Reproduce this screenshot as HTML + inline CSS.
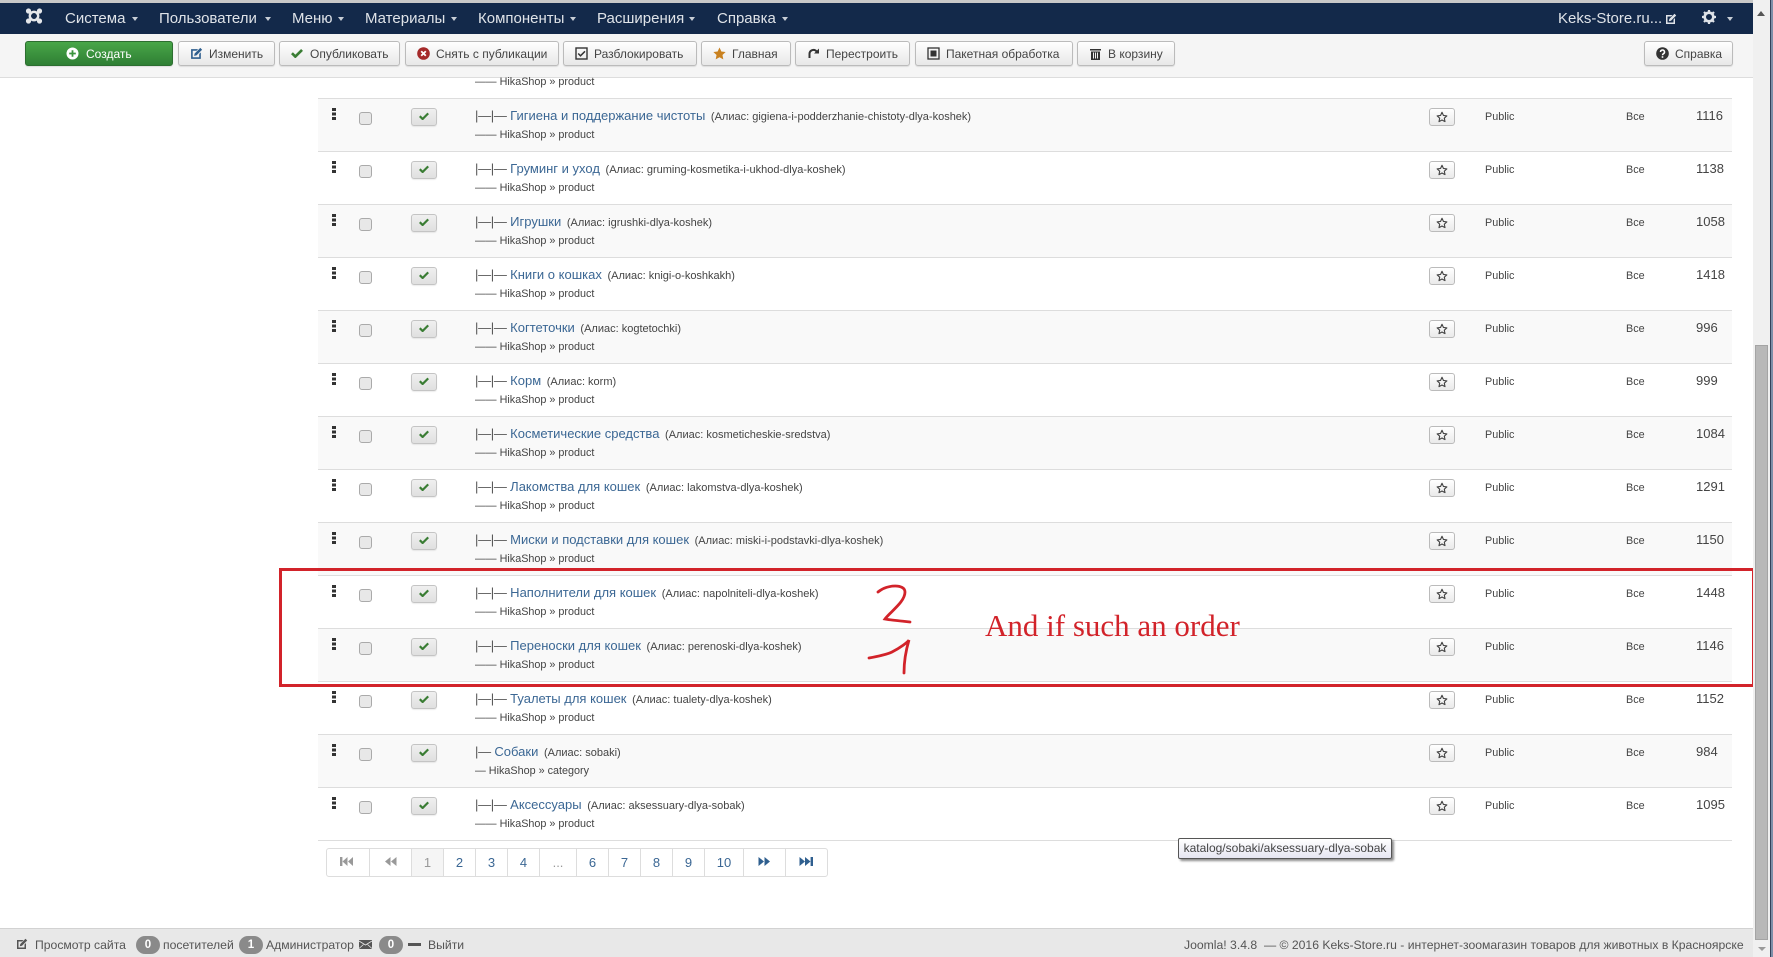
<!DOCTYPE html>
<html lang="ru"><head><meta charset="utf-8"><title>Keks-Store</title>
<style>
html,body{margin:0;padding:0;width:1773px;height:957px;overflow:hidden;background:#fff}
body{font-family:"Liberation Sans",sans-serif;position:relative;color:#333}
div,span,a,svg{position:absolute;display:block;white-space:nowrap}
#top{left:0;top:0;width:1753px;height:3px;background:#c8c8c8}
#nav{left:0;top:3px;width:1753px;height:31px;background:#13294a}
.n{top:10px;color:#dfe3e8;font-size:15px;line-height:18px}
.c{top:17px;width:0;height:0;border-left:3.5px solid transparent;border-right:3.5px solid transparent;border-top:4px solid #c8ced6}
#bar{left:0;top:34px;width:1753px;height:43px;background:#f5f5f5;border-bottom:1px solid #ddd}
.b{top:41px;height:23px;box-sizing:content-box;background:linear-gradient(#fff,#e8e8e8);border:1px solid #bbb;border-radius:3px;box-shadow:0 1px 1px rgba(0,0,0,.1)}
.b span{top:4px;font-size:12px;line-height:16px;color:#444}
.b svg{top:5px}
.r{left:318px;width:1414px;height:52px;border-bottom:1px solid #ddd}
.g{background:#f9f9f9}
.h{left:14px;top:9px;width:4px;height:3px;background:#333;box-shadow:0 4.5px 0 #333,0 9px 0 #333}
.k{left:41px;top:13px;width:11px;height:11px;background:#e8e8e8;border:1px solid #aaa;border-radius:3px}
.s{left:93px;top:9px;width:24px;height:16px;background:linear-gradient(#f0f0f0,#e0e0e0);border:1px solid #c4c4c4;border-radius:3px;box-shadow:0 1px 1px rgba(0,0,0,.08)}
.s svg{left:7px;top:3px}
.t{left:157px;top:8px;font-size:13px;line-height:18px;color:#3b6794}
.t i{font-style:normal;color:#555;letter-spacing:-.3px}
.t b{font-weight:normal;font-size:11px;color:#444;margin-left:2px}
.u{left:157px;top:28px;font-size:10.8px;line-height:16px;color:#444}
.f{left:1111px;top:9px;width:24px;height:16px;background:linear-gradient(#fff,#eaeaea);border:1px solid #bbb;border-radius:3px}
.f svg{left:6px;top:2px}
.p{left:1167px;top:11px;font-size:10.8px;line-height:14px;color:#444}
.a{left:1308px;top:11px;font-size:10.8px;line-height:14px;color:#444}
.d{left:1378px;top:8px;font-size:13px;line-height:18px;color:#444}
#pg{left:326px;top:848px;width:500px;height:27px;border:1px solid #ddd;border-radius:3px;background:#fff}
.q{top:0;height:27px;border-right:1px solid #ddd;text-align:center;font-size:13px;line-height:27px;color:#3b6794}
#ft{left:0;top:928px;width:1753px;height:29px;background:#e8e8e8;border-top:1px solid #d2d2d2;box-sizing:border-box}
.z{top:8px;font-size:12.2px;line-height:16px;color:#555}
.o{top:6px;width:24px;height:18px;border-radius:9px;background:#8a8a8a;color:#fff;font-size:11.5px;font-weight:bold;line-height:18px;text-align:center}
#sb{left:1753px;top:0;width:17px;height:957px;background:#f0f0f0}
#th{left:2px;top:345px;width:13px;height:595px;background:#b8b8b8;border:1px solid #a4a4a4;box-sizing:border-box}
#e1{left:1770px;top:0;width:1px;height:957px;background:#33415a}
#e2{left:1771px;top:0;width:2px;height:957px;background:#7d8fa8}
#box{left:279px;top:568px;width:1470px;height:113px;border:3px solid #d2232a}
#msg{left:985px;top:608px;font-family:"Liberation Serif",serif;font-size:31px;line-height:36px;color:#d2232a}
#tip{left:1178px;top:838px;width:212px;height:19px;background:linear-gradient(#fff,#e6e6f2);border:1px solid #555;border-radius:2px;box-shadow:2px 2px 2px rgba(0,0,0,.45);font-size:12px;line-height:19px;color:#444;text-align:center}
</style></head>
<body>
<svg width="0" height="0" style="position:absolute">
<defs>
<symbol id="ck" viewBox="0 0 10 8"><path d="M0.8 4.2L3.6 7 9.2 1.4" fill="none" stroke="currentColor" stroke-width="2.2"/></symbol>
<symbol id="st" viewBox="0 0 14 14"><path d="M7 1.5l1.7 3.7 4 .5-3 2.7.8 4L7 10.5l-3.5 1.9.8-4-3-2.7 4-.5z" fill="none" stroke="#444" stroke-width="1.3" stroke-linejoin="round"/></symbol>
<symbol id="ex" viewBox="0 0 12 12"><path d="M1 2h6.500L6 3.500H2.500v6h6V6.500L10 5v6H1z" fill="currentColor"/><path d="M9.500.8l1.700 1.700L6 7.700l-2.200.5.500-2.200z" fill="currentColor"/></symbol>
</defs></svg>

<div id="top"></div>
<div id="nav">
<svg style="left:25px;top:5px" width="18" height="16" viewBox="0 0 18 16"><g fill="#e4e6ea"><circle cx="3.500" cy="3" r="2.600"/><circle cx="14.500" cy="3" r="2.600"/><circle cx="3.500" cy="13" r="2.600"/><circle cx="14.500" cy="13" r="2.600"/></g><circle cx="9" cy="8" r="4.200" fill="none" stroke="#e4e6ea" stroke-width="2.400"/><path d="M4 3.500L7 6M14 3.500L11 6M4 12.500L7 10M14 12.500L11 10" stroke="#e4e6ea" stroke-width="2"/><rect x="7.700" y="6.700" width="2.600" height="2.600" fill="#13294a"/></svg>
</div>
<div class="n" style="left:65px">Система</div><div class="c" style="left:132px"></div>
<div class="n" style="left:159px">Пользователи</div><div class="c" style="left:265px"></div>
<div class="n" style="left:292px">Меню</div><div class="c" style="left:338px"></div>
<div class="n" style="left:365px">Материалы</div><div class="c" style="left:451px"></div>
<div class="n" style="left:478px">Компоненты</div><div class="c" style="left:570px"></div>
<div class="n" style="left:597px">Расширения</div><div class="c" style="left:689px"></div>
<div class="n" style="left:717px">Справка</div><div class="c" style="left:782px"></div>
<div class="n" style="left:1558px">Keks-Store.ru...</div>
<svg style="left:1665px;top:13px;color:#dfe3e8" width="12" height="12"><use href="#ex"/></svg>
<svg style="left:1702px;top:10px" width="14" height="14" viewBox="0 0 14 14"><circle cx="7" cy="7" r="4.300" fill="none" stroke="#dfe3e8" stroke-width="2.600"/><path d="M7 0v3M7 11v3M0 7h3M11 7h3M2 2l2 2M10 10l2 2M12 2l-2 2M4 10l-2 2" stroke="#dfe3e8" stroke-width="2.200"/></svg>
<div class="c" style="left:1727px"></div>

<div id="bar"></div>
<div class="b" style="left:25px;width:146px;background:linear-gradient(#48a648,#2f7f34);border-color:#2c6e30"><svg style="left:40px;top:5px" width="13" height="13" viewBox="0 0 13 13"><circle cx="6.500" cy="6.500" r="6" fill="#fff"/><path d="M6.500 3.200v6.600M3.200 6.500h6.600" stroke="#3a933c" stroke-width="1.800"/></svg><span style="left:60px;color:#fff">Создать</span></div>
<div class="b" style="left:178px;width:95px"><svg style="left:11px;color:#2f5f8f" width="13" height="13"><use href="#ex"/></svg><span style="left:30px">Изменить</span></div>
<div class="b" style="left:279px;width:119px"><svg style="left:11px;top:6px;color:#3a7d34" width="12" height="10"><use href="#ck"/></svg><span style="left:30px">Опубликовать</span></div>
<div class="b" style="left:405px;width:152px"><svg style="left:11px" width="13" height="13" viewBox="0 0 13 13"><circle cx="6.500" cy="6.500" r="6.300" fill="#a52a2a"/><path d="M4.200 4.200l4.600 4.600M8.800 4.200L4.200 8.800" stroke="#fff" stroke-width="1.800"/></svg><span style="left:30px">Снять с публикации</span></div>
<div class="b" style="left:563px;width:132px"><svg style="left:11px" width="13" height="13" viewBox="0 0 13 13"><rect x="1" y="1" width="11" height="11" fill="none" stroke="#333" stroke-width="1.400"/><path d="M3.200 6.500l2.300 2.300 4.500-4.500" fill="none" stroke="#333" stroke-width="1.500"/></svg><span style="left:30px">Разблокировать</span></div>
<div class="b" style="left:701px;width:88px"><svg style="left:11px" width="13" height="13" viewBox="0 0 14 14"><path d="M7 .5l2 4.300 4.600.6-3.400 3.200.9 4.700L7 11l-4.100 2.300.9-4.700L.4 5.400 5 4.800z" fill="#c9811f"/></svg><span style="left:30px">Главная</span></div>
<div class="b" style="left:795px;width:113px"><svg style="left:11px" width="13" height="13" viewBox="0 0 13 13"><path d="M2.500 11V7a4 4 0 0 1 7-2.700" fill="none" stroke="#333" stroke-width="2"/><path d="M12 1.500v5H7z" fill="#333"/></svg><span style="left:30px">Перестроить</span></div>
<div class="b" style="left:915px;width:156px"><svg style="left:11px" width="13" height="13" viewBox="0 0 13 13"><rect x="1" y="1" width="11" height="11" fill="none" stroke="#333" stroke-width="1.300"/><rect x="3.500" y="3.500" width="6" height="6" fill="#333"/></svg><span style="left:30px">Пакетная обработка</span></div>
<div class="b" style="left:1077px;width:96px"><svg style="left:11px" width="13" height="13" viewBox="0 0 13 13"><path d="M1 2h11v1.500H1zM2 4.500h9V13H2z" fill="#333"/><path d="M4.500 5.500v6M6.500 5.500v6M8.500 5.500v6" stroke="#f0f0f0"/></svg><span style="left:30px">В корзину</span></div>
<div class="b" style="left:1644px;width:87px"><svg style="left:11px" width="13" height="13" viewBox="0 0 13 13"><circle cx="6.500" cy="6.500" r="6.300" fill="#333"/><path d="M4.500 5a2 2 0 1 1 3 1.700c-.7.400-1 .8-1 1.500" fill="none" stroke="#fff" stroke-width="1.500"/><rect x="5.700" y="9.200" width="1.600" height="1.600" fill="#fff"/></svg><span style="left:30px">Справка</span></div>

<div class="u" style="left:475px;top:74px">—— HikaShop » product</div>
<div class="r" style="top:46px;clip-path:inset(45px 0 0 0)"></div>

<div class="r g" style="top:99px"><div class="h"></div><div class="k"></div><div class="s"><svg style="color:#3a7d34" width="10" height="8"><use href="#ck"/></svg></div><div class="t"><i>|—|—</i> Гигиена и поддержание чистоты <b>(Алиас: gigiena-i-podderzhanie-chistoty-dlya-koshek)</b></div><div class="u">—— HikaShop » product</div><div class="f"><svg width="12" height="12"><use href="#st"/></svg></div><div class="p">Public</div><div class="a">Все</div><div class="d">1116</div></div>
<div class="r" style="top:152px"><div class="h"></div><div class="k"></div><div class="s"><svg style="color:#3a7d34" width="10" height="8"><use href="#ck"/></svg></div><div class="t"><i>|—|—</i> Груминг и уход <b>(Алиас: gruming-kosmetika-i-ukhod-dlya-koshek)</b></div><div class="u">—— HikaShop » product</div><div class="f"><svg width="12" height="12"><use href="#st"/></svg></div><div class="p">Public</div><div class="a">Все</div><div class="d">1138</div></div>
<div class="r g" style="top:205px"><div class="h"></div><div class="k"></div><div class="s"><svg style="color:#3a7d34" width="10" height="8"><use href="#ck"/></svg></div><div class="t"><i>|—|—</i> Игрушки <b>(Алиас: igrushki-dlya-koshek)</b></div><div class="u">—— HikaShop » product</div><div class="f"><svg width="12" height="12"><use href="#st"/></svg></div><div class="p">Public</div><div class="a">Все</div><div class="d">1058</div></div>
<div class="r" style="top:258px"><div class="h"></div><div class="k"></div><div class="s"><svg style="color:#3a7d34" width="10" height="8"><use href="#ck"/></svg></div><div class="t"><i>|—|—</i> Книги о кошках <b>(Алиас: knigi-o-koshkakh)</b></div><div class="u">—— HikaShop » product</div><div class="f"><svg width="12" height="12"><use href="#st"/></svg></div><div class="p">Public</div><div class="a">Все</div><div class="d">1418</div></div>
<div class="r g" style="top:311px"><div class="h"></div><div class="k"></div><div class="s"><svg style="color:#3a7d34" width="10" height="8"><use href="#ck"/></svg></div><div class="t"><i>|—|—</i> Когтеточки <b>(Алиас: kogtetochki)</b></div><div class="u">—— HikaShop » product</div><div class="f"><svg width="12" height="12"><use href="#st"/></svg></div><div class="p">Public</div><div class="a">Все</div><div class="d">996</div></div>
<div class="r" style="top:364px"><div class="h"></div><div class="k"></div><div class="s"><svg style="color:#3a7d34" width="10" height="8"><use href="#ck"/></svg></div><div class="t"><i>|—|—</i> Корм <b>(Алиас: korm)</b></div><div class="u">—— HikaShop » product</div><div class="f"><svg width="12" height="12"><use href="#st"/></svg></div><div class="p">Public</div><div class="a">Все</div><div class="d">999</div></div>
<div class="r g" style="top:417px"><div class="h"></div><div class="k"></div><div class="s"><svg style="color:#3a7d34" width="10" height="8"><use href="#ck"/></svg></div><div class="t"><i>|—|—</i> Косметические средства <b>(Алиас: kosmeticheskie-sredstva)</b></div><div class="u">—— HikaShop » product</div><div class="f"><svg width="12" height="12"><use href="#st"/></svg></div><div class="p">Public</div><div class="a">Все</div><div class="d">1084</div></div>
<div class="r" style="top:470px"><div class="h"></div><div class="k"></div><div class="s"><svg style="color:#3a7d34" width="10" height="8"><use href="#ck"/></svg></div><div class="t"><i>|—|—</i> Лакомства для кошек <b>(Алиас: lakomstva-dlya-koshek)</b></div><div class="u">—— HikaShop » product</div><div class="f"><svg width="12" height="12"><use href="#st"/></svg></div><div class="p">Public</div><div class="a">Все</div><div class="d">1291</div></div>
<div class="r g" style="top:523px"><div class="h"></div><div class="k"></div><div class="s"><svg style="color:#3a7d34" width="10" height="8"><use href="#ck"/></svg></div><div class="t"><i>|—|—</i> Миски и подставки для кошек <b>(Алиас: miski-i-podstavki-dlya-koshek)</b></div><div class="u">—— HikaShop » product</div><div class="f"><svg width="12" height="12"><use href="#st"/></svg></div><div class="p">Public</div><div class="a">Все</div><div class="d">1150</div></div>
<div class="r" style="top:576px"><div class="h"></div><div class="k"></div><div class="s"><svg style="color:#3a7d34" width="10" height="8"><use href="#ck"/></svg></div><div class="t"><i>|—|—</i> Наполнители для кошек <b>(Алиас: napolniteli-dlya-koshek)</b></div><div class="u">—— HikaShop » product</div><div class="f"><svg width="12" height="12"><use href="#st"/></svg></div><div class="p">Public</div><div class="a">Все</div><div class="d">1448</div></div>
<div class="r g" style="top:629px"><div class="h"></div><div class="k"></div><div class="s"><svg style="color:#3a7d34" width="10" height="8"><use href="#ck"/></svg></div><div class="t"><i>|—|—</i> Переноски для кошек <b>(Алиас: perenoski-dlya-koshek)</b></div><div class="u">—— HikaShop » product</div><div class="f"><svg width="12" height="12"><use href="#st"/></svg></div><div class="p">Public</div><div class="a">Все</div><div class="d">1146</div></div>
<div class="r" style="top:682px"><div class="h"></div><div class="k"></div><div class="s"><svg style="color:#3a7d34" width="10" height="8"><use href="#ck"/></svg></div><div class="t"><i>|—|—</i> Туалеты для кошек <b>(Алиас: tualety-dlya-koshek)</b></div><div class="u">—— HikaShop » product</div><div class="f"><svg width="12" height="12"><use href="#st"/></svg></div><div class="p">Public</div><div class="a">Все</div><div class="d">1152</div></div>
<div class="r g" style="top:735px"><div class="h"></div><div class="k"></div><div class="s"><svg style="color:#3a7d34" width="10" height="8"><use href="#ck"/></svg></div><div class="t"><i>|—</i> Собаки <b>(Алиас: sobaki)</b></div><div class="u">— HikaShop » category</div><div class="f"><svg width="12" height="12"><use href="#st"/></svg></div><div class="p">Public</div><div class="a">Все</div><div class="d">984</div></div>
<div class="r" style="top:788px"><div class="h"></div><div class="k"></div><div class="s"><svg style="color:#3a7d34" width="10" height="8"><use href="#ck"/></svg></div><div class="t"><i>|—|—</i> Аксессуары <b>(Алиас: aksessuary-dlya-sobak)</b></div><div class="u">—— HikaShop » product</div><div class="f"><svg width="12" height="12"><use href="#st"/></svg></div><div class="p">Public</div><div class="a">Все</div><div class="d">1095</div></div>

<div id="pg">
<div class="q" style="left:0;width:42px;color:#999"><svg style="left:13px;top:8px" width="14" height="9" viewBox="0 0 14 9"><path d="M0 0h2.400v9H0zM7.500 0v9L2.500 4.500zM13 0v9L8 4.500z" fill="#999"/></svg></div>
<div class="q" style="left:43px;width:41px"><svg style="left:14px;top:8px" width="13" height="9" viewBox="0 0 13 9"><path d="M6.500 0v9L1 4.500zM12.500 0v9L7 4.500z" fill="#999"/></svg></div>
<div class="q" style="left:85px;width:31px;background:#f5f5f5;color:#999">1</div>
<div class="q" style="left:117px;width:31px">2</div>
<div class="q" style="left:149px;width:31px">3</div>
<div class="q" style="left:181px;width:31px">4</div>
<div class="q" style="left:213px;width:36px;color:#999">...</div>
<div class="q" style="left:250px;width:31px">6</div>
<div class="q" style="left:282px;width:31px">7</div>
<div class="q" style="left:314px;width:31px">8</div>
<div class="q" style="left:346px;width:31px">9</div>
<div class="q" style="left:378px;width:38px">10</div>
<div class="q" style="left:417px;width:41px"><svg style="left:14px;top:8px" width="13" height="9" viewBox="0 0 13 9"><path d="M.5 0v9L6 4.500zM6.500 0v9L12 4.500z" fill="#2f5f8f"/></svg></div>
<div class="q" style="left:459px;width:40px;border-right:0"><svg style="left:13px;top:8px" width="14" height="9" viewBox="0 0 14 9"><path d="M.5 0v9L6 4.500zM6 0v9l5.500-4.500zM11.600 0H14v9h-2.400z" fill="#2f5f8f"/></svg></div>
</div>

<div id="box"></div>
<svg style="left:860px;top:575px" width="60" height="105" viewBox="860 575 60 105"><path d="M878 592C888 584 905 584 905 592C905 602 890 612 885 619C890 620 900 621 910 622" fill="none" stroke="#d2232a" stroke-width="2.800" stroke-linecap="round"/><path d="M869 658C880 656 888 654 892 652C900 648 908 642 909 640C906 650 904 662 904 673" fill="none" stroke="#d2232a" stroke-width="2.800" stroke-linecap="round"/></svg>
<div id="msg">And if such an order</div>

<div id="tip">katalog/sobaki/aksessuary-dlya-sobak</div>

<div id="ft"></div>
<svg style="left:16px;top:938px;color:#555" width="12" height="12"><use href="#ex"/></svg>
<div class="z" style="left:35px;top:937px">Просмотр сайта</div>
<div class="o" style="left:136px;top:936px">0</div>
<div class="z" style="left:163px;top:937px">посетителей</div>
<div class="o" style="left:239px;top:936px">1</div>
<div class="z" style="left:266px;top:937px">Администратор</div>
<svg style="left:359px;top:940px" width="13" height="9" viewBox="0 0 13 9"><rect width="13" height="9" fill="#555"/><path d="M0 1l6.500 4L13 1M0 8.500l4.500-4M13 8.500l-4.500-4" fill="none" stroke="#e8e8e8" stroke-width=".8"/></svg>
<div class="o" style="left:379px;top:936px">0</div>
<div style="left:408px;top:943px;width:13px;height:3px;background:#555"></div>
<div class="z" style="left:428px;top:937px">Выйти</div>
<div class="z" style="left:1184px;top:937px">Joomla! 3.4.8 &nbsp;— © 2016 Keks-Store.ru - интернет-зоомагазин товаров для животных в Красноярске</div>

<div id="sb"><div id="th"></div>
<div style="left:4px;top:11px;width:0;height:0;border-left:4.500px solid transparent;border-right:4.500px solid transparent;border-bottom:5px solid #555"></div>
<div style="left:5px;top:947px;width:0;height:0;border-left:4px solid transparent;border-right:4px solid transparent;border-top:4px solid #999"></div>
</div>
<div id="e1"></div><div id="e2"></div>
</body></html>
